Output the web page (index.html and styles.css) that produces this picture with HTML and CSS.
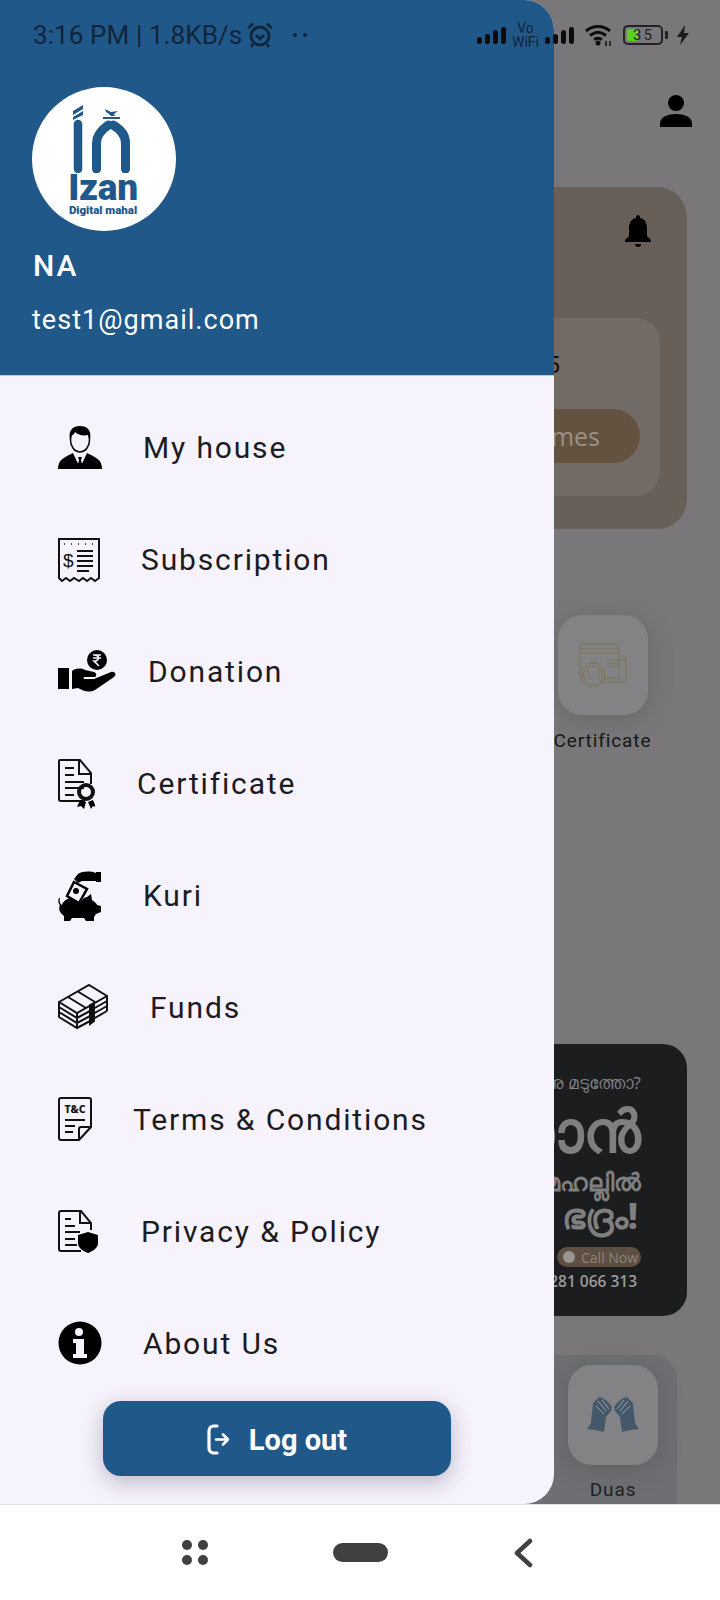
FILE: index.html
```html
<!DOCTYPE html>
<html lang="en">
<head>
    <meta charset="UTF-8">
    <meta name="viewport" content="width=device-width, initial-scale=1.0">
    <title>Izan Digital Mahal</title>
    <link rel="stylesheet" href="styles.css">
</head>
<body>

<div class="screen">
    <div class="content">

        <!-- Home page, dimmed behind the drawer -->
        <div class="page">
            <div class="top-bar">
                <svg class="user-icon" viewBox="0 0 32 32"><circle cx="16" cy="8" r="8"/><path d="M0 32v-4c0-6 8-9 16-9s16 3 16 9v4z"/></svg>
            </div>

            <div class="prayer-card">
                <svg class="bell-icon" viewBox="0 0 26 32"><path d="M13 0c1 0 2 1 2 2v1c5 1 7 5 7 10v8l4 4v2H0v-2l4-4v-8C4 8 6 4 11 3V2c0-1 1-2 2-2z"/><path d="M10 29h6c0 2-1 3-3 3s-3-1-3-3z"/></svg>
                <div class="prayer-inner">
                    <span class="prayer-time">5</span>
                    <div class="prayer-button">mes</div>
                </div>
            </div>

            <div class="tile-panel cert-panel">
                <div class="tile">
                    <svg class="cert-icon" viewBox="0 0 48 44" fill="none" stroke="#7a6f4a" stroke-width="0.800">
                        <rect x="1" y="1" width="39" height="34" rx="3"/>
                        <path d="M1 6h39M1 10h39M28 17h11M29 20h10M31 23h8M40 13h4c2 0 3 1 3 3v20c0 2-1 3-3 3H22"/>
                        <path d="M40 17h7"/>
                        <circle cx="14" cy="32" r="12" fill="#838284"/>
                        <circle cx="14" cy="32" r="9.500"/>
                        <path d="M10 27c-2 5 0 10 5 10M18 27c3 3 2 8 0 9M33 33l3 3M38 34l3 3"/>
                    </svg>
                </div>
                <span class="tile-label">Certificate</span>
            </div>

            <div class="promo">
                <div class="promo-line">നു മടുത്തോ?</div>
                <div class="promo-big">ഇസാൻ</div>
                <div class="promo-mid">മഹല്ലിൽ</div>
                <div class="promo-mid promo-mid-last">ഭദ്രം!</div>
                <div class="promo-call"><span class="call-dot"></span>Call Now</div>
                <div class="promo-phone">281 066 313</div>
            </div>

            <div class="tile-panel duas-panel">
                <div class="tile">
                    <svg class="duas-icon" viewBox="0 0 52 36" fill="#44586a">
                        <path d="M12 0c5 1 9 4 13 10l-1 4-5 6-2 15-9-2-8-1 4-6L6 6z"/>
                        <path d="M40 0c-5 1-9 4-13 10l1 4 5 6 2 15 9-2 8-1-4-6-2-20z"/>
                        <path d="M11 4l8 10M15 3l7 9M41 4l-8 10M37 3l-7 9M9 9l8 8M43 9l-8 8" stroke="#9aa3ac" stroke-width="1" fill="none"/>
                    </svg>
                </div>
                <span class="tile-label duas-label">Duas</span>
            </div>
        </div>

        <!-- Navigation drawer -->
        <div class="drawer">
            <div class="drawer-header">
                <div class="logo">
                    <svg class="logo-mark" viewBox="0 0 67 68" fill="#20588a">
                        <path d="M3 6l10-6v4L3 10zM3 12l10-6v4L3 15z"/>
                        <path d="M8 19v45" fill="none" stroke="#20588a" stroke-width="8.500" stroke-linecap="round"/>
                        <path d="M26.500 64V38c0-9 6-14 12-18M43 20c7 4 12.500 9 12.500 18v26" fill="none" stroke="#20588a" stroke-width="9" stroke-linecap="round"/>
                        <path d="M35 4l6 3 7-1-4 3 1 2h-4l-2-2-3-2z"/>
                        <path d="M33 12h17v2H33z"/>
                    </svg>
                    <span class="logo-name">Izan</span>
                    <span class="logo-sub">Digital mahal</span>
                </div>
                <div class="user-name">NA</div>
                <div class="user-email">test1@gmail.com</div>
            </div>

            <ul class="menu">
                <li class="menu-item">
                    <svg class="menu-icon" width="44" height="44" viewBox="0 0 44 44">
                        <ellipse cx="22" cy="14" rx="9.500" ry="12" fill="#f6f3fc" stroke="#000" stroke-width="1.500"/>
                        <path d="M12 14C10 4 15 0 22 0s12 4 10 14l-2-5c-5 1-10 0-13-3-1 3-3 3-4 4z"/>
                        <path d="M0 43c0-9 5-11 15-16l7 9 7-9c10 5 15 7 15 16z"/>
                        <path d="M15 27l7 15 7-15-7 4z" fill="#f6f3fc"/>
                        <path d="M20 31h4l-1 3 2 8h-6l2-8z"/>
                    </svg>
                    <span class="menu-label gap-my-house">My house</span>
                </li>
                <li class="menu-item">
                    <svg class="menu-icon" width="42" height="44" viewBox="0 0 42 44" fill="none" stroke="#111" stroke-width="2">
                        <path d="M1 40V1h40v39l-4 3-4-3-4 3-4-3-4 3-5-3-4 3-4-3-4 3z"/>
                        <path d="M6 6h1M13 6h1M20 6h1M27 6h1M34 6h1" stroke-width="1.600"/>
                        <path d="M19 13h16M19 18h16M19 23h16M19 28h16M19 33h12"/>
                        <text x="5" y="29" class="icon-dollar">$</text>
                    </svg>
                    <span class="menu-label gap-subscription">Subscription</span>
                </li>
                <li class="menu-item">
                    <svg class="menu-icon" width="58" height="44" viewBox="0 0 58 44">
                        <circle cx="39" cy="10" r="10"/>
                        <path d="M35 5h8M35 8h8M36 5c5 0 6 4 2 6l-2 0 5 5" stroke="#f6f3fc" stroke-width="1.600" fill="none"/>
                        <path d="M0 18h11v21H0z"/>
                        <path d="M14 21c4-3 9-3 13-1l9 2c3 1 3 5 0 5H27c-2 0-2 2 0 2h9l17-7c4-1 6 3 3 5L37 40c-6 3-12 1-17-2l-6 1z"/>
                    </svg>
                    <span class="menu-label gap-donation">Donation</span>
                </li>
                <li class="menu-item">
                    <svg class="menu-icon" width="37" height="50" viewBox="0 0 37 50">
                        <path d="M2 1h20l11 13v11M27 42H3c-1 0-2-1-2-2V2c0-1 1-1 1-1" fill="none" stroke="#111" stroke-width="2"/>
                        <path d="M21 2v13h12" fill="none" stroke="#111" stroke-width="2"/>
                        <path d="M7 9h9M7 16h9M7 23h19M7 29h19M7 36h9" stroke="#111" stroke-width="2"/>
                        <circle cx="28" cy="33" r="7" fill="none" stroke="#111" stroke-width="4"/>
                        <path d="M22 41l-3 7 4-1 3 3 2-7zM30 43l3 7 2-3 3 1-3-7z"/>
                    </svg>
                    <span class="menu-label gap-certificate">Certificate</span>
                </li>
                <li class="menu-item">
                    <svg class="menu-icon" width="43" height="50" viewBox="0 0 43 50">
                        <path d="M2 27c-1 3 0 6 2 7 1-4 6-7 9-7l9 5 4-5 3-1 4-3 1 6c3 2 5 4 5 5l4 1v6l-5 2-2 3v4h-8l-2-3H14l-2 3H6v-5c-4-3-6-7-4-11-2-1-2-5-1-7z"/>
                        <path d="M16 11l13 7-8 14-12-7z" fill="#f6f3fc" stroke="#000" stroke-width="2.500"/>
                        <circle cx="18" cy="20" r="3"/>
                        <path d="M38 2c-6-2-13-2-18 1l-4 5 4 4 4-2h14z"/>
                        <rect x="38" y="1" width="5" height="10"/>
                    </svg>
                    <span class="menu-label gap-kuri">Kuri</span>
                </li>
                <li class="menu-item">
                    <svg class="menu-icon" width="50" height="46" viewBox="0 0 50 46" fill="none" stroke="#111" stroke-width="2">
                        <path d="M1 18L31 1l18 11-30 17zM10 13l18 11M19 7l18 11"/>
                        <path d="M1 18v15l18 11 13-7M1 23l18 11 13-7M1 28l18 11 13-7M19 29v15"/>
                        <path d="M35 25l14-8M35 30l14-8M35 35l14-8M49 12v15"/>
                        <path d="M32 21v19l4-3V19z" fill="#111"/>
                    </svg>
                    <span class="menu-label gap-funds">Funds</span>
                </li>
                <li class="menu-item">
                    <svg class="menu-icon" width="34" height="44" viewBox="0 0 34 44" fill="none" stroke="#111" stroke-width="2">
                        <path d="M21 43H3c-1 0-2-1-2-2V3c0-1 1-2 2-2h28c1 0 2 1 2 2v27z"/>
                        <path d="M21 43V32c0-1 1-2 2-2h10"/>
                        <path d="M7 23h20M7 29h10M7 35h8"/>
                        <text x="17" y="16" class="icon-tc">T&amp;C</text>
                    </svg>
                    <span class="menu-label gap-terms">Terms &amp; Conditions</span>
                </li>
                <li class="menu-item">
                    <svg class="menu-icon" width="41" height="43" viewBox="0 0 41 43">
                        <path d="M23 41H3c-1 0-2-1-2-2V3c0-1 1-2 2-2h20l10 12v7" fill="none" stroke="#111" stroke-width="2"/>
                        <path d="M22 2v11h11" fill="none" stroke="#111" stroke-width="2"/>
                        <path d="M7 9h6M7 16h10M7 22h15M7 29h10M7 35h12" stroke="#111" stroke-width="2"/>
                        <path d="M30 22l10 3v8c0 5-5 8-10 10-5-2-10-5-10-10v-8z"/>
                    </svg>
                    <span class="menu-label gap-privacy">Privacy &amp; Policy</span>
                </li>
                <li class="menu-item">
                    <svg class="menu-icon" width="44" height="44" viewBox="0 0 44 44">
                        <circle cx="22" cy="22" r="21.500"/>
                        <circle cx="21" cy="11" r="4" fill="#f6f3fc"/>
                        <path d="M15 18h11v15h3v4H15v-4h3V22h-3z" fill="#f6f3fc"/>
                    </svg>
                    <span class="menu-label gap-about">About Us</span>
                </li>
            </ul>

            <button class="logout">
                <svg class="logout-icon" width="23" height="31" viewBox="0 0 23 31" fill="none" stroke="#fff" stroke-width="3.200" stroke-linecap="round" stroke-linejoin="round">
                    <path d="M10 2H7C4 2 2 4 2 7v17c0 3 2 5 5 5h3"/>
                    <path d="M9 15.500h12M16 10.500l5 5-5 5" stroke-width="2.600"/>
                </svg>
                Log out
            </button>
        </div>
    </div>

    <!-- Android navigation bar -->
    <div class="nav-bar">
        <div class="nav-dots"><i></i><i></i><i></i><i></i></div>
        <div class="nav-home"></div>
        <svg class="nav-back" width="20" height="30" viewBox="0 0 20 30" fill="none" stroke="#413f42" stroke-width="4.500" stroke-linecap="round" stroke-linejoin="round"><path d="M17 3 4 15l13 12"/></svg>
    </div>

    <!-- Status bar sits on top of everything -->
    <div class="status-bar">
        <span class="status-text">3:16 PM | 1.8KB/s</span>
        <svg class="alarm" width="26" height="26" viewBox="0 0 26 26" fill="none" stroke="#10253a" stroke-width="2.800">
            <circle cx="13" cy="14" r="9"/>
            <path d="M9 13l4 4 4-4M1.500 6 6 1.500M24.500 6 20 1.500M6 22l-2 3M20 22l2 3"/>
        </svg>
        <span class="status-dots"><i></i><i></i></span>
        <span class="status-spacer"></span>
        <svg class="signal" width="29" height="17" viewBox="0 0 29 17"><rect x="0" y="10" width="5" height="7" rx="2.500"/><rect x="8" y="7" width="5" height="10" rx="2.500"/><rect x="16" y="3" width="5" height="14" rx="2.500"/><rect x="24" y="0" width="5" height="17" rx="2.500"/></svg>
        <span class="vowifi">Vo<br>WiFi</span>
        <svg class="signal" width="29" height="17" viewBox="0 0 29 17"><rect x="0" y="10" width="5" height="7" rx="2.500"/><rect x="8" y="7" width="5" height="10" rx="2.500"/><rect x="16" y="3" width="5" height="14" rx="2.500"/><rect x="24" y="0" width="5" height="17" rx="2.500"/></svg>
        <svg class="wifi" width="28" height="22" viewBox="0 0 28 22" fill="none" stroke="#0c0c0e" stroke-width="3">
            <path d="M1 7c7-6 17-6 24 0M5 11.500c5-4 11-4 16 0M9 15.500c3-2 5-2 8 0"/>
            <circle cx="13" cy="19" r="2.500" fill="#0c0c0e" stroke="none"/>
            <path d="M21 17v5M25 17v5" stroke-width="1.400"/>
        </svg>
        <div class="battery">
            <div class="battery-body"><span class="battery-fill"></span><span class="battery-num">35</span></div>
            <span class="battery-cap"></span>
        </div>
        <svg class="bolt" width="12" height="20" viewBox="0 0 12 20"><path d="M8 0 0 12h5l-2 8 9-12H7z"/></svg>
    </div>
</div>

</body>
</html>
```

FILE: styles.css
```css
* {
    box-sizing: border-box;
}
body {
    margin: 0;
    font-family: Roboto, "Liberation Sans", sans-serif;
}
.screen {
    position: relative;
    width: 720px;
    height: 1600px;
    display: flex;
    flex-direction: column;
    overflow: hidden;
    background-color: #fff;
}
.content {
    position: relative;
    height: 1504px;
    flex: none;
    overflow: hidden;
}

/* Dimmed home page */
.page {
    height: 100%;
    padding-left: 440px;
    display: flex;
    flex-direction: column;
    background-color: #79777a;
}
.top-bar {
    height: 187px;
    flex: none;
    padding: 95px 28px 0 0;
    display: flex;
    justify-content: flex-end;
}
.user-icon {
    width: 32px;
    height: 32px;
}
.prayer-card {
    position: relative;
    width: 247px;
    height: 342px;
    flex: none;
    padding: 131px 27px 32px 0;
    border-radius: 30px;
    background-color: #675f58;
}
.bell-icon {
    position: absolute;
    top: 28px;
    right: 36px;
    width: 26px;
    height: 32px;
}
.prayer-inner {
    height: 178px;
    padding-top: 32px;
    border-radius: 24px;
    background-color: #726a64;
    text-align: right;
}
.prayer-time {
    display: block;
    padding-right: 100px;
    font-size: 24px;
    line-height: 30px;
    color: #111;
}
.prayer-button {
    width: 200px;
    height: 54px;
    margin-top: 29px;
    padding: 0 40px 0 0;
    border-radius: 27px;
    background-color: #62523f;
    color: #9a9186;
    font-family: "Open Sans", sans-serif;
    font-size: 25px;
    font-weight: 500;
    line-height: 54px;
}
.tile-panel {
    display: flex;
    flex-direction: column;
    align-items: center;
    flex: none;
}
.cert-panel {
    width: 207px;
    margin: 86px 0 0 0;
    height: 165px;
    padding-left: 118px;
}
.tile {
    width: 90px;
    height: 100px;
    flex: none;
    display: flex;
    align-items: center;
    justify-content: center;
    border-radius: 24px;
    background-color: #838284;
    box-shadow: 0 4px 24px rgba(60, 60, 40, 0.25);
}
.cert-icon {
    width: 48px;
    height: 44px;
}
.tile-label {
    margin-top: 14px;
    font-size: 19px;
    letter-spacing: 0.9px;
    color: #161616;
    white-space: nowrap;
}
.promo {
    width: 247px;
    height: 272px;
    margin-top: 264px;
    padding: 28px 46px 0 0;
    flex: none;
    display: flex;
    flex-direction: column;
    align-items: flex-end;
    border-radius: 24px;
    background-color: #1c1d1f;
    color: #7f7f80;
    white-space: nowrap;
    overflow: hidden;
    font-family: "Noto Sans", "Open Sans", sans-serif;
}
.promo-line {
    font-size: 17px;
    line-height: 22px;
}
.promo-big {
    font-size: 58px;
    font-weight: 800;
    line-height: 72px;
}
.promo-mid {
    font-size: 24px;
    font-weight: 800;
    line-height: 32px;
}
.promo-mid-last {
    margin-right: 3px;
    font-size: 36px;
    line-height: 36px;
}
.promo-call {
    width: 84px;
    height: 20px;
    margin-top: 13px;
    display: flex;
    align-items: center;
    gap: 6px;
    padding-left: 6px;
    border-radius: 10px;
    background-color: #5d4f42;
    font-size: 14px;
    font-family: "Open Sans", sans-serif;
    color: #8d8478;
}
.call-dot {
    width: 12px;
    height: 12px;
    flex: none;
    border-radius: 50%;
    background-color: #9b9692;
}
.promo-phone {
    margin: 2px 4px 0 0;
    font-family: "Open Sans", sans-serif;
    font-size: 15.500px;
    font-weight: 600;
    line-height: 24px;
    color: #9a9a9a;
}
.duas-panel {
    width: 237px;
    height: 149px;
    margin-top: 39px;
    padding: 10px 0 0 109px;
    background-color: #6d6f73;
    border-radius: 24px 24px 0 0;
}
.duas-label {
    color: #222;
    margin-top: 13px;
}
.duas-icon {
    width: 52px;
    height: 36px;
}

/* Drawer */
.drawer {
    position: absolute;
    top: 0;
    left: 0;
    bottom: 0;
    width: 554px;
    display: flex;
    flex-direction: column;
    border-radius: 0 30px 30px 0;
    background-color: #f6f3fc;
    overflow: hidden;
}
.drawer-header {
    height: 376px;
    flex: none;
    padding: 87px 0 0 32px;
    background-color: #20588a;
    border-bottom: 1px solid #c8c8d0;
    color: #fff;
}
.logo {
    width: 144px;
    height: 144px;
    padding: 18px 2px 0 0;
    display: flex;
    flex-direction: column;
    align-items: center;
    border-radius: 50%;
    background-color: #fff;
    color: #20588a;
}
.logo-mark {
    width: 67px;
    height: 68px;
    flex: none;
}
.logo-name {
    margin-top: -2px;
    font-size: 37px;
    font-weight: 900;
    line-height: 34px;
    letter-spacing: -0.3px;
}
.logo-sub {
    font-size: 11.500px;
    font-weight: 900;
    line-height: 11px;
}
.user-name {
    margin-top: 17px;
    padding-left: 1px;
    font-size: 30px;
    font-weight: 500;
    line-height: 36px;
    letter-spacing: 2px;
}
.user-email {
    margin-top: 18px;
    font-size: 27px;
    line-height: 36px;
    letter-spacing: 1.030px;
}
.menu {
    list-style: none;
    margin: 0;
    padding: 16px 0 0 58px;
    flex: none;
}
.menu-item {
    height: 111.900px;
    display: flex;
    align-items: center;
}
.menu-icon {
    flex: none;
}
.menu-label {
    font-size: 30px;
    letter-spacing: 1.850px;
    color: #1c1b1f;
    white-space: nowrap;
}
.gap-my-house { margin-left: 41px; }
.gap-subscription { margin-left: 41px; }
.gap-donation { margin-left: 32px; }
.gap-certificate { margin-left: 42px; }
.gap-kuri { margin-left: 42px; }
.gap-funds { margin-left: 42px; }
.gap-terms { margin-left: 41px; }
.gap-privacy { margin-left: 42px; }
.gap-about { margin-left: 41px; }
.icon-dollar {
    font-family: "Liberation Sans", sans-serif;
    font-size: 19px;
    fill: #111;
    stroke: none;
}
.icon-tc {
    font-family: "Noto Sans", sans-serif;
    font-size: 10.500px;
    font-weight: 800;
    text-anchor: middle;
    fill: #111;
    stroke: none;
}
.logout {
    width: 348px;
    height: 75px;
    margin: auto 0 28px 103px;
    padding: 2px 0 0;
    flex: none;
    display: flex;
    align-items: center;
    justify-content: center;
    gap: 19px;
    border: none;
    border-radius: 18px;
    background-color: #20588a;
    color: #fff;
    font-family: Roboto, sans-serif;
    font-size: 29px;
    font-weight: 700;
    box-shadow: 0 6px 22px rgba(30, 30, 50, 0.28);
}

/* Bottom nav */
.nav-bar {
    flex: 1;
    position: relative;
    display: flex;
    align-items: center;
    border-top: 1px solid #e4e2e6;
    padding: 0 0 0 182px;
    background-color: #fff;
}
.nav-dots {
    width: 26px;
    display: grid;
    grid-template-columns: 10px 10px;
    gap: 5px;
    justify-content: space-between;
}
.nav-dots i {
    height: 10px;
    border-radius: 50%;
    background-color: #413f42;
}
.nav-home {
    width: 55px;
    height: 19px;
    margin-left: 125px;
    border-radius: 10px;
    background-color: #413f42;
}
.nav-back {
    margin-left: 125px;
}

/* Status bar */
.status-bar {
    position: absolute;
    top: 0;
    left: 0;
    width: 100%;
    height: 70px;
    padding: 0 31px 0 33px;
    display: flex;
    align-items: center;
    color: #10253a;
}
.status-text {
    font-size: 26px;
    letter-spacing: 0.1px;
    white-space: nowrap;
}
.alarm {
    margin-left: 5px;
}
.status-dots {
    margin-left: 20px;
    display: flex;
    gap: 6px;
}
.status-dots i {
    width: 4px;
    height: 4px;
    border-radius: 50%;
    background-color: #10253a;
}
.status-spacer {
    flex: 1;
}
.signal {
    fill: #0c0c0e;
}
.vowifi {
    width: 27px;
    margin: 0 6px 0 6px;
    font-size: 14px;
    line-height: 14px;
    text-align: center;
    color: #10253a;
}
.wifi {
    margin-left: 11px;
}
.battery {
    margin-left: 10px;
    display: flex;
    align-items: center;
    gap: 2px;
}
.battery-body {
    position: relative;
    width: 40px;
    height: 20px;
    padding-left: 2px;
    border: 2px solid #222;
    border-radius: 5px;
    display: flex;
    align-items: center;
}
.battery-fill {
    width: 11px;
    height: 12px;
    border-radius: 2px;
    background-color: #5bd11e;
}
.battery-num {
    position: absolute;
    left: 8px;
    font-size: 15px;
    letter-spacing: 2px;
    color: #222;
}
.battery-cap {
    width: 3px;
    height: 8px;
    border-radius: 1px;
    background-color: #222;
}
.bolt {
    margin-left: 9px;
    fill: #1a1a1a;
}
```
